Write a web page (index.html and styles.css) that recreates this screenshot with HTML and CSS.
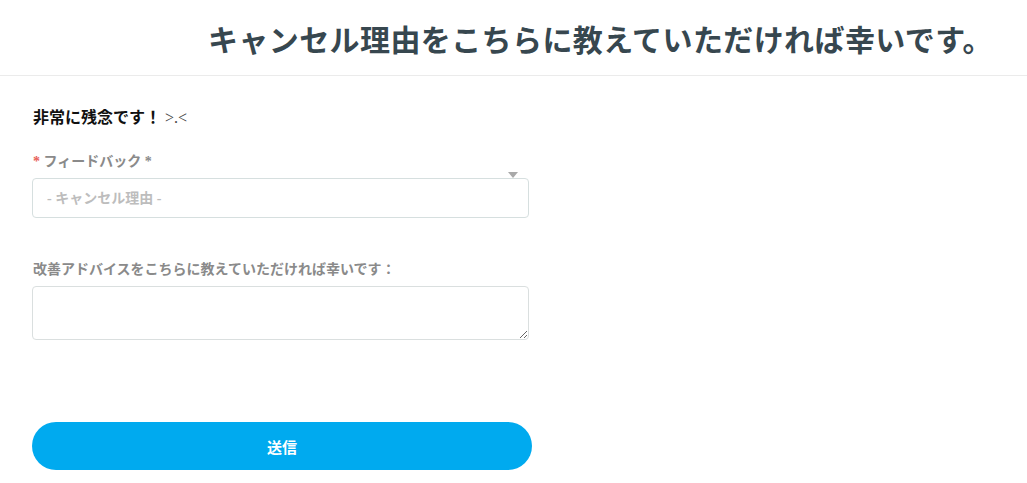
FILE: index.html
```html
<!DOCTYPE html>
<html lang="ja">
<head>
<meta charset="UTF-8" />
<meta name="viewport" content="width=device-width, initial-scale=1" />
<title>キャンセル理由</title>
<link rel="stylesheet" href="styles.css">
</head>
<body>

<header class="page-head">
  <h1>キャンセル理由をこちらに教えていただければ幸いです。</h1>
</header>

<form class="cancel-form" onsubmit="return false;">
  <p class="sorry">非常に残念です！ <span class="face">&gt;.&lt;</span></p>

  <label class="field-label" for="reason"><span class="req">*</span> フィードバック *</label>
  <div class="select-wrap">
    <select id="reason">
      <option value="" selected>- キャンセル理由 -</option>
      <option>料金が高い</option>
      <option>使わなくなった</option>
      <option>その他</option>
    </select>
  </div>

  <label class="field-label advice" for="advice">改善アドバイスをこちらに教えていただければ幸いです：</label>
  <textarea id="advice"></textarea>

  <button type="submit" class="send">送信</button>
</form>

</body>
</html>
```

FILE: styles.css
```css
body {
  margin: 0;
  background: #fff;
  font-family: "Liberation Serif", "Noto Sans CJK JP", serif;
}
.page-head {
  height: 75px;
  border-bottom: 1px solid #ebebeb;
  padding-left: 208px;
}
.page-head h1 {
  margin: 0;
  padding-top: 16px;
  font-family: "Noto Sans CJK JP", sans-serif;
  font-size: 30px;
  font-weight: 700;
  line-height: 44px;
  letter-spacing: 0.4px;
  color: #37474f;
}
.cancel-form {
  padding-left: 32px;
  width: 500px;
}
.sorry {
  margin: 30px 0 0 1px;
  font-size: 16px;
  line-height: 24px;
  font-weight: 700;
  color: #111;
}
.face {
  font-weight: 400;
  color: #444;
}
.field-label {
  display: block;
  margin: 22px 0 6px 1px;
  font-size: 14px;
  line-height: 20px;
  font-weight: 700;
  color: #8a8a8a;
}
.field-label.advice {
  margin-top: 42px;
}
.req {
  color: #e8615a;
}
.select-wrap {
  position: relative;
  width: 497px;
}
.select-wrap::after {
  content: "";
  position: absolute;
  top: -6px;
  right: 11px;
  border-left: 5px solid transparent;
  border-right: 5px solid transparent;
  border-top: 6px solid #a9a9a9;
}
select {
  appearance: none;
  -webkit-appearance: none;
  display: block;
  width: 100%;
  height: 40px;
  padding: 0 14px;
  border: 1px solid #d6dfdf;
  border-radius: 4px;
  background: #fff;
  font-family: inherit;
  font-size: 14px;
  font-weight: 700;
  color: #bdbdbd;
  box-sizing: border-box;
}
textarea {
  display: block;
  width: 497px;
  height: 54px;
  border: 1px solid #dadfdf;
  border-radius: 4px;
  box-sizing: border-box;
  font-family: inherit;
  font-size: 14px;
  padding: 8px 12px;
}
.send {
  display: block;
  width: 500px;
  height: 48px;
  margin-top: 82px;
  border: none;
  border-radius: 24px;
  background-color: #00aaef;
  color: white;
  font-family: "Noto Sans CJK JP", sans-serif;
  font-size: 15px;
  font-weight: 700;
  cursor: pointer;
}
.send:hover {
  background-color: #0099d8;
}
```
